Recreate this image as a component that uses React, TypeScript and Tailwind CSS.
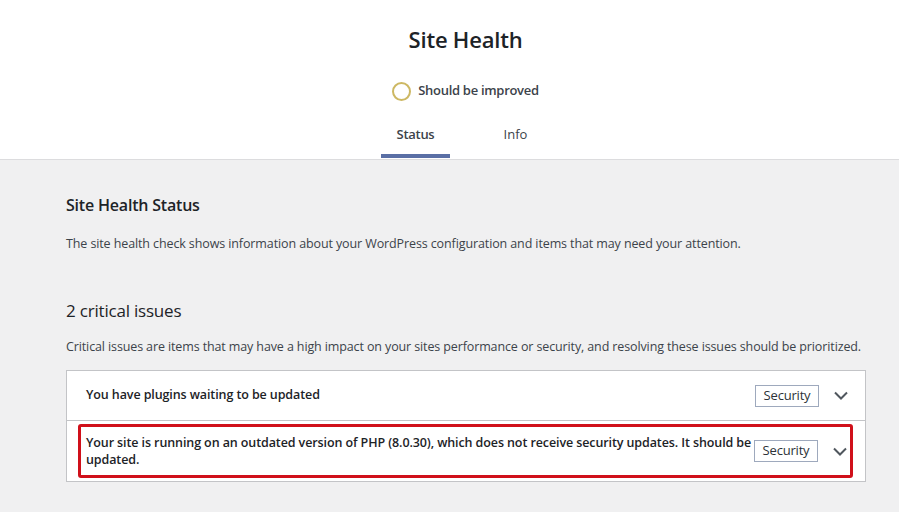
import React from "react";

const font = { fontFamily: '"Open Sans", "Noto Sans", "Liberation Sans", sans-serif' };

function Chevron() {
  return (
    <svg width="14" height="9" viewBox="0 0 14 9" className="shrink-0">
      <path d="M1 1.5 L7 7.5 L13 1.5" fill="none" stroke="#50575e" strokeWidth="2" />
    </svg>
  );
}

function Badge() {
  return (
    <span className="shrink-0 w-[64px] justify-center border border-[#9ea9bd] h-[22px] flex items-center text-[13px] text-[#2c3338] tracking-[-0.2px]">
      Security
    </span>
  );
}

export default function App() {
  return (
    <div className="w-[899px] h-[512px] overflow-hidden bg-[#f0f0f1] text-[#1d2327]" style={font}>
      <header className="bg-white border-b border-[#dcdcde] h-[160px] pl-[32px] flex flex-col items-center">
        <h1 className="mt-[23px] text-[22px] leading-[32px] font-semibold tracking-[-0.2px]">Site Health</h1>
        <div className="mt-[26px] flex items-center gap-[7px] h-[20px]">
          <span className="w-[19px] h-[19px] rounded-full border-[2px] border-[#cdb863]" />
          <span className="text-[13px] font-semibold text-[#3c434a] tracking-[-0.3px]">Should be improved</span>
        </div>
        <nav className="mt-[22px] flex gap-[31px] h-[35px]">
          <div className="w-[69px] flex flex-col items-center justify-between">
            <span className="text-[13px] font-semibold text-[#3c434a] leading-[18px] mt-[2px] tracking-[-0.3px]">Status</span>
            <span className="w-full h-[4px] bg-[#5a6fa5]" />
          </div>
          <div className="w-[69px] flex flex-col items-center">
            <span className="text-[13px] text-[#3c434a] leading-[18px] mt-[2px]">Info</span>
          </div>
        </nav>
      </header>

      <main className="ml-[66px] w-[800px]">
        <h2 className="mt-[34px] text-[16px] leading-[22px] font-semibold tracking-[-0.2px]">Site Health Status</h2>
        <p className="mt-[18px] text-[12.5px] leading-[20px] text-[#3c434a] tracking-[-0.11px]">
          The site health check shows information about your WordPress configuration and items that may need your attention.
        </p>
        <h3 className="mt-[45px] text-[17px] leading-[24px] tracking-[-0.2px]">2 critical issues</h3>
        <p className="mt-[14px] text-[12.5px] leading-[20px] text-[#3c434a] tracking-[-0.12px]">
          Critical issues are items that may have a high impact on your sites performance or security, and resolving these issues should be prioritized.
        </p>
        <div className="mt-[13px] w-[800px] border border-[#c3c4c7] bg-white">
          <div className="h-[50px] flex items-center pl-[19px] pr-[17px] border-b border-[#c3c4c7]">
            <span className="flex-1 text-[12.5px] font-semibold tracking-[-0.1px]">You have plugins waiting to be updated</span>
            <Badge />
            <span className="ml-[15px] flex"><Chevron /></span>
          </div>
          <div className="relative h-[60px] flex items-center pl-[19px] pr-[17px]">
            <span className="w-[668px] text-[12.5px] leading-[17px] font-semibold tracking-[-0.1px]">
              Your site is running on an outdated version of PHP (8.0.30), which does not receive security updates. It should be updated.
            </span>
            <Badge />
            <span className="ml-[15px] flex"><Chevron /></span>
            <div className="absolute left-[11px] top-[3px] right-[12px] bottom-[3px] border-[3px] border-[#d0101a] rounded-[3px] pointer-events-none" />
          </div>
        </div>
      </main>
    </div>
  );
}
